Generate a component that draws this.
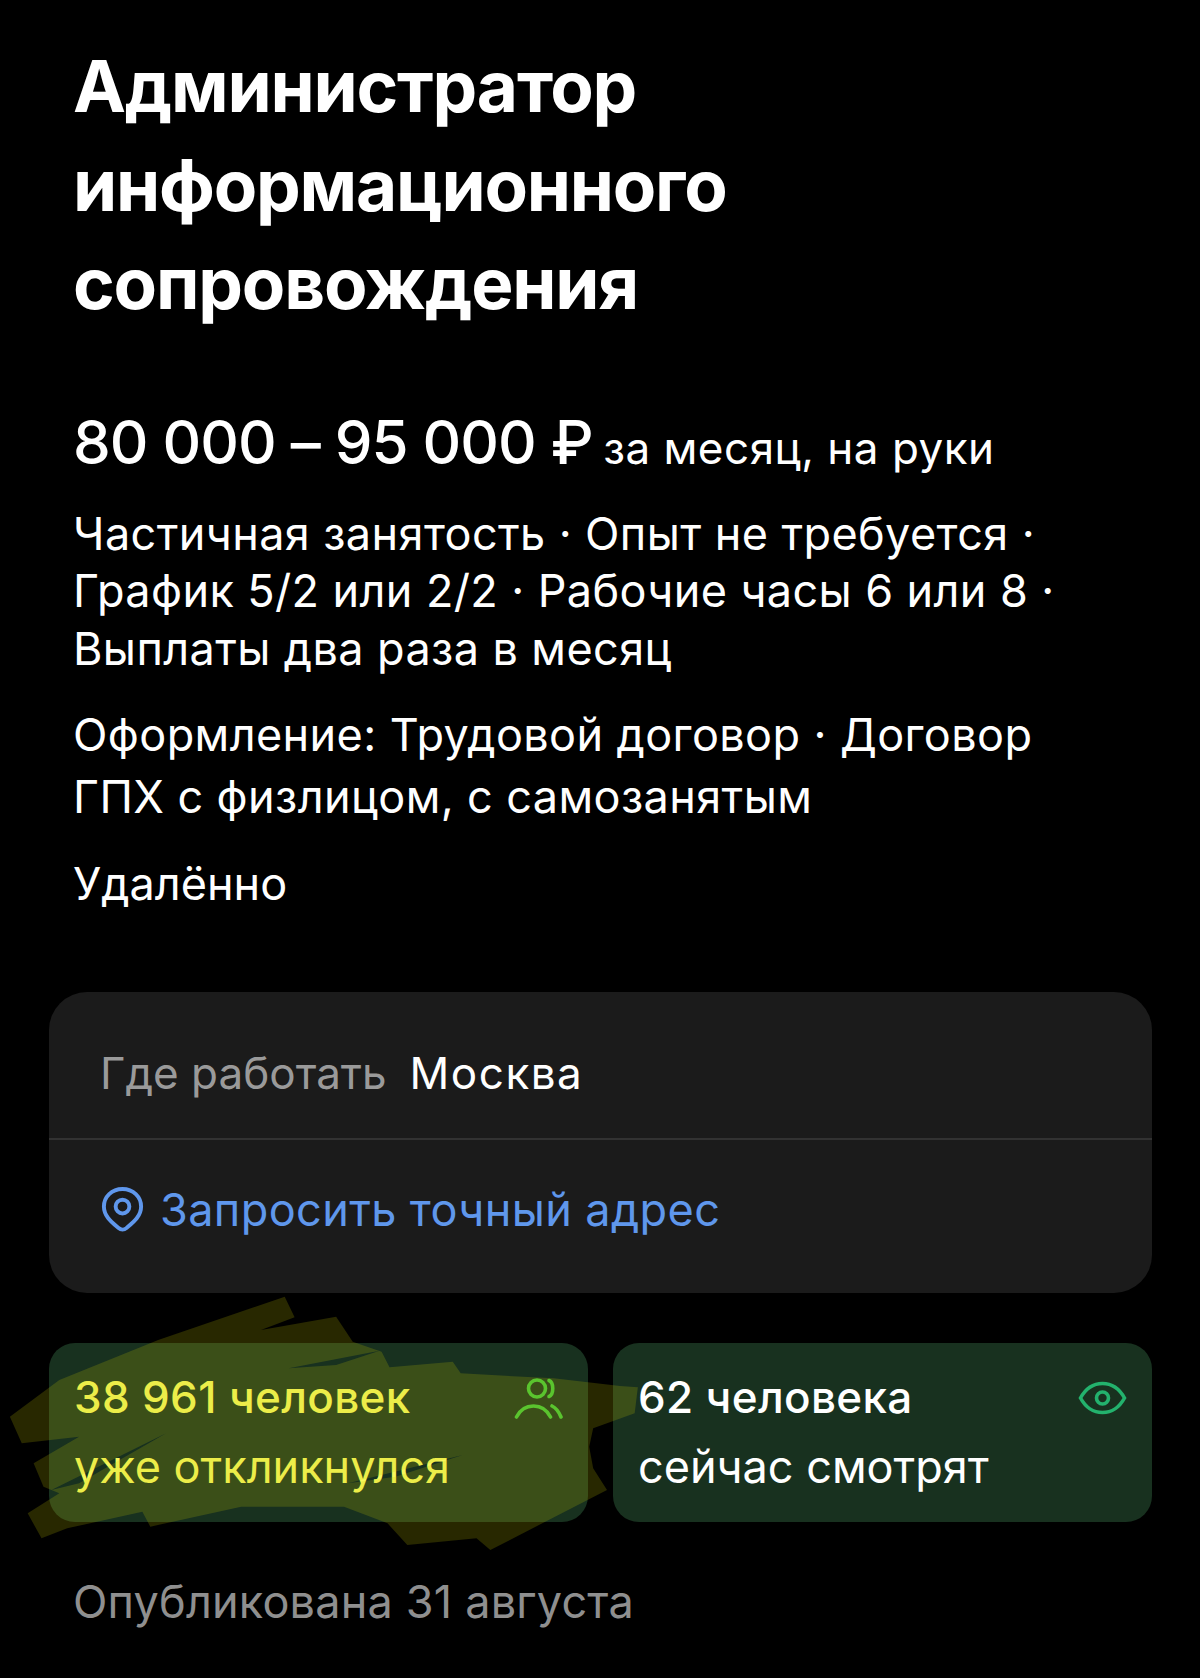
<div class="page">
  <section class="head">
    <h1>Администратор<br />информационного<br />сопровождения</h1>
    <p class="salary"><span class="sum">80 000 – 95 000 ₽</span> <span class="per">за месяц, на руки</span></p>
    <p class="terms">Частичная занятость · Опыт не требуется ·<br />График 5/2 или 2/2 · Рабочие часы 6 или 8 ·<br />Выплаты два раза в месяц</p>
    <p class="form">Оформление: Трудовой договор · Договор<br />ГПХ с физлицом, с самозанятым</p>
    <p class="place">Удалённо</p>
  </section>

  <section class="card">
    <div class="row where"><span class="muted">Где работать</span><span class="city">Москва</span></div>
    <div class="row addr">
      <svg class="pin" viewBox="0 0 44 48" fill="none" stroke="#5f97ec" stroke-width="4">
        <path d="M22 3C11 3 3 11 3 21c0 10 8 16 15 22 2.300 2 5.700 2 8 0 7-6 15-12 15-22C41 11 33 3 22 3Z" />
        <circle cx="22" cy="21" r="7" />
      </svg>
      <span>Запросить точный адрес</span>
    </div>
  </section>

  <section class="stats">
    <div class="stat hot">
      <div class="txt"><b>38 961 человек</b><span>уже откликнулся</span></div>
      <svg class="ic" viewBox="0 0 49 41" fill="none" stroke="#3fc43a" stroke-width="3.600" stroke-linecap="round">
        <ellipse cx="23" cy="10.500" rx="8.500" ry="8.500" />
        <path d="M35 2.500c5 2 5 14 0 16" />
        <path d="M2.500 39c4-8 10-11 17-11s13 3 17 11" />
        <path d="M38 28c4 2 7 6 9 11" />
      </svg>
    </div>
    <div class="stat">
      <div class="txt"><b>62 человека</b><span>сейчас смотрят</span></div>
      <svg class="eye" viewBox="0 0 49 34" fill="none" stroke="#23b26d" stroke-width="3.600">
        <path d="M2.500 17C8 7 15 2.500 24.500 2.500S41 7 46.500 17C41 27 34 31.500 24.500 31.500S8 27 2.500 17Z" />
        <circle cx="24.500" cy="17" r="6" />
      </svg>
    </div>
  </section>

  <p class="pub">Опубликована 31 августа</p>

  <svg class="scribble" viewBox="0 0 1669 900" preserveAspectRatio="none" aria-hidden="true">
    <g fill="#c8c800" opacity="0.2">
      <path fill-rule="evenodd" d="M720 50 745 112 660 150 850 110 892 185 965 215 985 262 1145 245 1165 280 1400 295 1568 318 1613 322 1605 400 1500 445 1490 500 1500 565 1535 630 1240 810 1205 775 1030 795 980 730 870 680 610 680 380 740 360 695 170 745 105 775 70 700 150 640 110 620 85 550 200 470 55 490 25 410 150 300 400 180ZM880 610 1170 525 1000 590ZM130 630 420 460 200 610ZM730 265 960 212 850 255Z" />
    </g>
  </svg>
</div>

<style>
  :global(body) {
    margin: 0;
    background: #000;
  }
  .page {
    position: relative;
    width: 1200px;
    height: 1678px;
    overflow: hidden;
    background: #000;
    color: #fff;
    font-family: Inter, "Liberation Sans", sans-serif;
  }
  .head {
    padding: 37px 73px 0;
  }
  h1 {
    margin: 0;
    font-size: 71px;
    line-height: 98.5px;
    font-weight: 700;
    letter-spacing: -1.2px;
  }
  p {
    margin: 0;
  }
  .salary {
    margin-top: 74px;
    line-height: 70px;
    white-space: nowrap;
  }
  .sum {
    font-size: 60px;
    font-weight: 500;
    letter-spacing: -1px;
  }
  .per {
    font-size: 44px;
    letter-spacing: 0.5px;
    margin-left: 6px;
  }
  .terms {
    margin-top: 12px;
    font-size: 45px;
    letter-spacing: 0.4px;
    line-height: 57.500px;
  }
  .form {
    margin-top: 27px;
    font-size: 45px;
    letter-spacing: 0.4px;
    line-height: 62px;
  }
  .place {
    margin-top: 25px;
    font-size: 45px;
    line-height: 62px;
  }
  .card {
    margin: 77px 48px 0 49px;
    background: #1b1b1b;
    border-radius: 38px;
    font-size: 44px;
  }
  .row {
    display: flex;
    align-items: center;
    padding: 0 51px;
  }
  .where {
    gap: 23px;
    height: 148px;
    box-sizing: border-box;
    padding-top: 16px;
    border-bottom: 2px solid #323232;
  }
  .muted {
    color: #9a9a9a;
  }
  .city {
    letter-spacing: 1.5px;
  }
  .addr {
    height: 153px;
    box-sizing: border-box;
    padding-bottom: 15px;
    gap: 15px;
    font-size: 45px;
    letter-spacing: 0.4px;
    color: #5f97ec;
  }
  .pin {
    width: 45px;
    height: 47px;
  }
  .stats {
    display: grid;
    grid-template-columns: 539px 539px;
    gap: 25px;
    margin: 50px 48px 0 49px;
  }
  .stat {
    height: 179px;
    box-sizing: border-box;
    background: #18311f;
    border-radius: 26px;
    padding: 0 25px;
    display: flex;
    justify-content: space-between;
    align-items: flex-start;
  }
  .hot {
    color: #f6f75c;
  }
  .txt {
    display: flex;
    flex-direction: column;
    font-size: 45px;
    line-height: 70px;
    padding-top: 19px;
  }
  .txt b {
    font-size: 44px;
    font-weight: 500;
    letter-spacing: 0.35px;
  }
  .ic {
    width: 49px;
    height: 41px;
    margin-top: 35px;
  }
  .eye {
    width: 49px;
    height: 34px;
    margin-top: 38px;
  }
  .pub {
    margin: 49px 0 0 73px;
    font-size: 45px;
    letter-spacing: 0.2px;
    line-height: 62px;
    color: #8f8f8f;
  }
  .scribble {
    position: absolute;
    left: 0;
    top: 1280px;
    width: 660px;
    height: 300px;
    pointer-events: none;
  }
</style>
